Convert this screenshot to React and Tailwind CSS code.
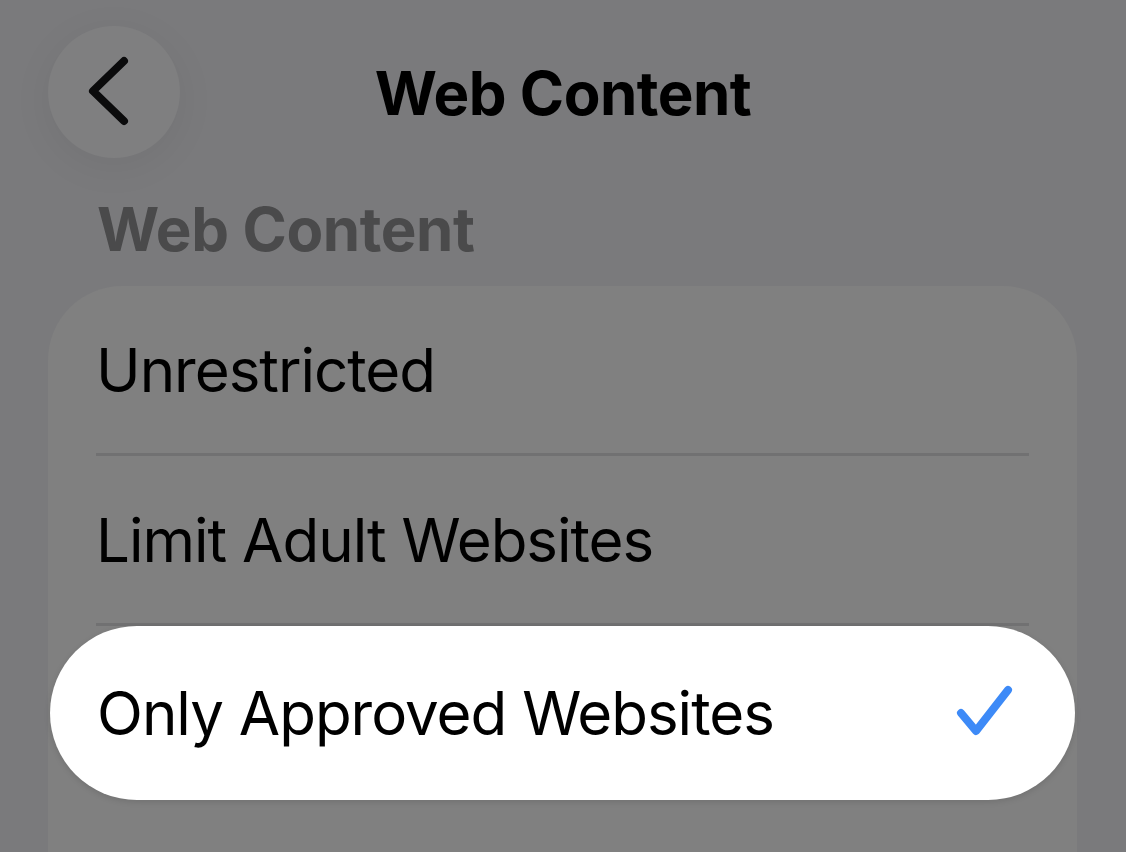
export default function App() {
  const rows = ["Unrestricted", "Limit Adult Websites"];

  return (
    <div className="h-[852px] w-[1126px] overflow-hidden bg-[#7a7a7c] font-['Inter',sans-serif] text-black">
      <div className="relative h-[186px]">
        <button
          type="button"
          className="absolute left-[48px] top-[26px] flex h-[132px] w-[132px] items-center justify-center rounded-full bg-[#7f7f80] shadow-[0_8px_40px_rgba(0,0,0,0.06)]"
        >
          <svg width="48" height="80" viewBox="0 0 48 80" fill="none" className="-ml-[10px]">
            <path d="M39 9 L8 39 L39 69" stroke="#0b0b0c" strokeWidth="8" strokeLinecap="round" strokeLinejoin="round" />
          </svg>
        </button>
        <h1 className="pt-[55px] text-center text-[60px] font-bold leading-[76px] tracking-[-0.5px]">
          Web Content
        </h1>
      </div>

      <h2 className="px-[97px] text-[60px] font-bold leading-[86px] tracking-[-0.4px] text-[#4a4a4b]">
        Web Content
      </h2>

      <div className="mx-[48px] mt-[14px] w-[1029px] rounded-t-[74px] bg-[#808080] pb-[80px]">
        {rows.map((label) => (
          <div key={label} className="px-[48px]">
            <div className="flex h-[170px] items-center border-b-[3px] border-[#717172] text-[60px] leading-none tracking-[-1px]">
              {label}
            </div>
          </div>
        ))}
        <div className="mx-[2px] flex h-[174px] items-center justify-between rounded-full bg-white pl-[47px] pr-[60px] text-[60px] leading-none tracking-[-1px] shadow-[0_2px_6px_rgba(0,0,0,0.12)]">
          <span>Only Approved Websites</span>
          <svg width="60" height="56" viewBox="0 0 60 56" fill="none">
            <path d="M6 28 L21 46 L53 5" stroke="#3d8af7" strokeWidth="8" strokeLinecap="round" strokeLinejoin="round" />
          </svg>
        </div>
      </div>
    </div>
  );
}
